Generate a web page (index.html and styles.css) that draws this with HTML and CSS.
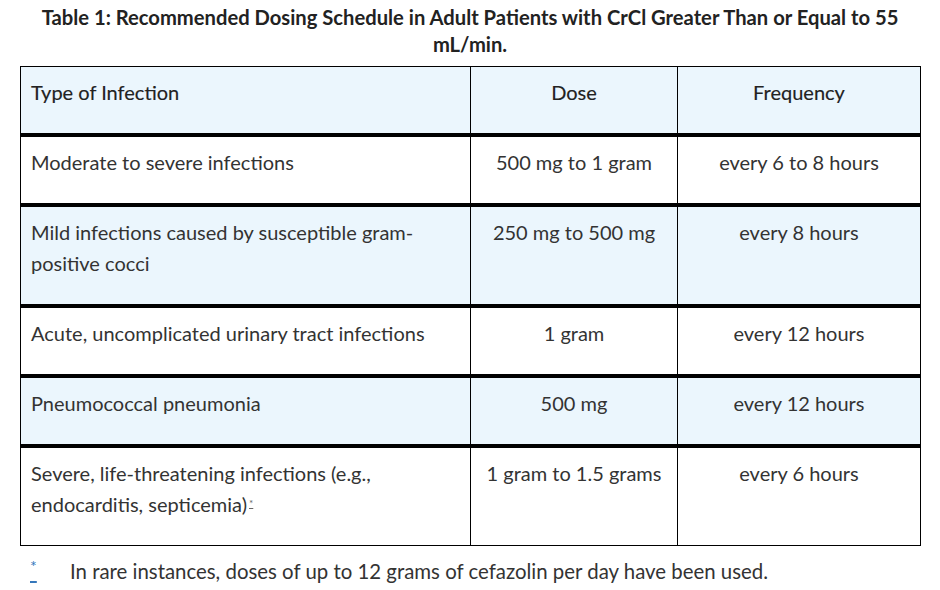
FILE: index.html
```html
<!DOCTYPE html>
<html>
<head><meta charset="utf-8"><link rel="stylesheet" href="styles.css"></head>
<body>
<div class="page">
  <p class="caption">Table 1: Recommended Dosing Schedule in Adult Patients with CrCl Greater Than or Equal to 55 mL/min.</p>
  <table class="dosing">
    <colgroup>
      <col class="col-type">
      <col class="col-dose">
      <col class="col-freq">
    </colgroup>
    <thead>
      <tr>
        <th class="left">Type of Infection</th>
        <th>Dose</th>
        <th>Frequency</th>
      </tr>
    </thead>
    <tbody>
      <tr>
        <td class="left">Moderate to severe infections</td>
        <td>500 mg to 1 gram</td>
        <td>every 6 to 8 hours</td>
      </tr>
      <tr class="alt">
        <td class="left">Mild infections caused by susceptible gram-positive cocci</td>
        <td>250 mg to 500 mg</td>
        <td>every 8 hours</td>
      </tr>
      <tr>
        <td class="left">Acute, uncomplicated urinary tract infections</td>
        <td>1 gram</td>
        <td>every 12 hours</td>
      </tr>
      <tr class="alt">
        <td class="left">Pneumococcal pneumonia</td>
        <td>500 mg</td>
        <td>every 12 hours</td>
      </tr>
      <tr>
        <td class="left">Severe, life-threatening infections (e.g., endocarditis, septicemia)<a href="#fn1" class="ref"><sup>*</sup></a></td>
        <td>1 gram to 1.5 grams</td>
        <td>every 6 hours</td>
      </tr>
    </tbody>
  </table>
  <dl class="footnotes" id="fn1">
    <dt><a href="#fn1" class="fn-mark"><sup>*</sup></a></dt>
    <dd>In rare instances, doses of up to 12 grams of cefazolin per day have been used.</dd>
  </dl>
</div>
</body>
</html>
```
FILE: styles.css
```css
html, body { margin: 0; padding: 0; background: #fff; }
body {
  font-family: "Lato", "Open Sans", sans-serif;
  color: #333;
  font-size: 20px;
}
.page { padding: 0 20px; }

.caption {
  margin: 0;
  padding-top: 4px;
  text-align: center;
  font-family: "Lato", sans-serif;
  font-weight: bold;
  font-size: 20.2px;
  line-height: 27px;
  color: #222;
}

.dosing {
  margin-top: 8px;
  width: 900px;
  border-collapse: collapse;
  table-layout: fixed;
}
.col-type { width: 450px; }
.col-dose { width: 207px; }
.col-freq { width: 243px; }

.dosing th, .dosing td {
  border: 1px solid #000;
  padding: 10px 10px 25px 10px;
  line-height: 31px;
  vertical-align: top;
  text-align: center;
}
.dosing th {
  font-weight: normal;
  font-size: 20px;
  color: #222;
  background: #ebf6fd;
  -webkit-text-stroke: 0.15px #222;
}
.dosing td { font-size: 20px; color: #333; }
.dosing tbody tr td { border-top: 4px solid #000; }
.dosing .left { text-align: left; }
.dosing tr.alt td { background: #ebf6fd; }

.ref {
  color: #666;
  text-decoration: none;
  margin-left: 2px;
}
.ref sup {
  font-size: 10px;
  line-height: 0;
  vertical-align: 5px;
  text-decoration: underline;
}

.footnotes {
  display: flex;
  margin: 10px 0 0 0;
  line-height: 31px;
  font-size: 20.4px;
}
.footnotes dt {
  width: 50px;
  padding-left: 10px;
  box-sizing: border-box;
}
.fn-mark {
  color: #3577bb;
  font-size: 18px;
  text-decoration: underline;
  text-decoration-thickness: 2px;
  text-underline-offset: 2px;
}
.fn-mark sup {
  font-size: 16px;
  line-height: 0;
  vertical-align: 7px;
}
.footnotes dd { margin: 0; color: #333; }
```
